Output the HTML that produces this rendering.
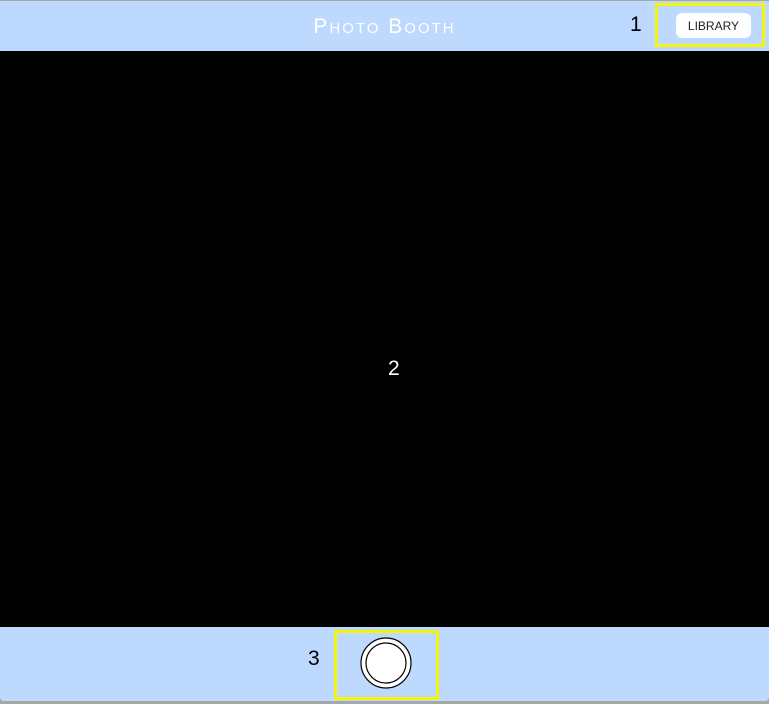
<!DOCTYPE html>
<html><head><meta charset="utf-8"><style>
html,body{margin:0;padding:0;}
body{width:769px;height:704px;background:#a8a8a8;position:relative;overflow:hidden;font-family:"Liberation Sans",sans-serif;}
.top{position:absolute;left:0;top:1px;width:769px;height:50px;background:#bdd9fd;}
.title{position:absolute;left:0;width:769px;top:14px;text-align:center;color:#fff;font-size:21px;letter-spacing:2px;font-variant:small-caps;}
.black{position:absolute;left:0;top:51px;width:769px;height:576px;background:#000;}
.bot{position:absolute;left:0;top:627px;width:769px;height:74px;background:#bdd9fd;border-radius:0 0 4px 4px;}
.y{position:absolute;border:3px solid #f5f50a;box-sizing:border-box;}
.btn{position:absolute;left:676px;top:13px;width:75px;height:25px;background:#fff;border-radius:6px;font-size:12px;color:#222;text-align:center;line-height:26px;}
.num{position:absolute;font-size:21px;color:#000;}
</style></head><body>
<div class="top"><div class="title">Photo Booth</div></div>
<div class="num" style="left:630px;top:13px">1</div>
<div class="y" style="left:655px;top:3px;width:110px;height:44px"></div>
<div class="btn">LIBRARY</div>
<div class="black"></div>
<div class="num" style="left:388px;top:357px;color:#fff">2</div>
<div class="bot"></div>
<div class="num" style="left:308px;top:647px">3</div>
<div class="y" style="left:334px;top:630px;width:105px;height:70px"></div>
<svg style="position:absolute;left:359px;top:636px" width="54" height="54">
<circle cx="27" cy="27" r="25" fill="#fff" stroke="#000" stroke-width="1.2"/>
<circle cx="27" cy="27" r="20" fill="#fff" stroke="#000" stroke-width="1.2"/>
</svg>
</body></html>
